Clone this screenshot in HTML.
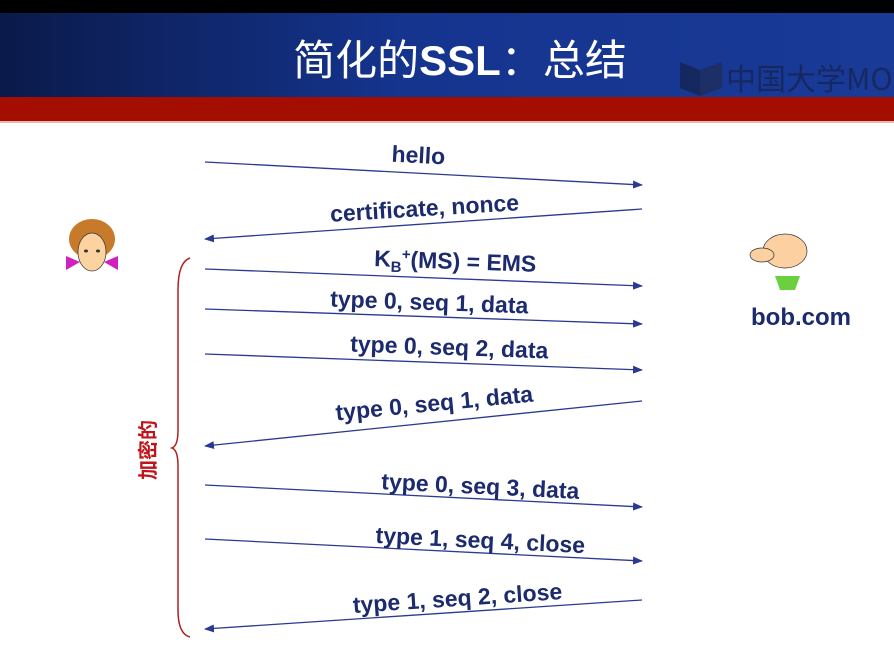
<!DOCTYPE html>
<html><head><meta charset="utf-8"><style>
html,body{margin:0;padding:0;background:#fff;width:894px;height:653px;overflow:hidden}
</style></head><body>
<svg width="894" height="653" viewBox="0 0 894 653" xmlns="http://www.w3.org/2000/svg">
<defs>
<linearGradient id="bg" x1="0" x2="1" y1="0" y2="0">
<stop offset="0" stop-color="#0b1a4a"/><stop offset="0.45" stop-color="#14348e"/><stop offset="1" stop-color="#1a3a98"/>
</linearGradient>
<marker id="ah" markerWidth="10" markerHeight="8" refX="9" refY="4" orient="auto" markerUnits="userSpaceOnUse">
<path d="M0,0 L10,4 L0,8 Z" fill="#2a3a90"/>
</marker>
</defs>
<rect x="0" y="0" width="894" height="13" fill="#000"/>
<rect x="0" y="13" width="894" height="85" fill="url(#bg)"/>
<rect x="0" y="97" width="894" height="24" fill="#a40e00"/>
<rect x="0" y="121" width="894" height="2" fill="#e8b8b0"/>
<text x="460" y="75" text-anchor="middle" fill="#fff" font-family="Liberation Sans, Noto Sans CJK SC, sans-serif" font-size="42">简化的<tspan font-weight="bold">SSL</tspan>：总结</text>
<g opacity="0.4">
<path d="M680,62 L700,70 L700,96 L680,88 Z" fill="#111"/>
<path d="M700,70 L722,62 L722,88 L700,96 Z" fill="#222"/>
<text x="726" y="90" fill="#111" font-family="Noto Sans CJK SC, sans-serif" font-size="30">中国大学MO</text>
</g>
<g stroke="#2a3a90" stroke-width="1.3" fill="none" marker-end="url(#ah)">
<line x1="205" y1="162" x2="642" y2="185"/>
<line x1="642" y1="209" x2="205" y2="239"/>
<line x1="205" y1="269" x2="642" y2="286"/>
<line x1="205" y1="309" x2="642" y2="324"/>
<line x1="205" y1="354" x2="642" y2="370"/>
<line x1="642" y1="401" x2="205" y2="446"/>
<line x1="205" y1="485" x2="642" y2="507"/>
<line x1="205" y1="539" x2="642" y2="561"/>
<line x1="642" y1="600" x2="205" y2="629"/>
</g>
<g fill="#1c2a6e" font-family="Liberation Sans, sans-serif" font-weight="bold" font-size="23" text-anchor="middle">
<text transform="translate(418,163) rotate(3)">hello</text>
<text transform="translate(425,216) rotate(-3.5)">certificate, nonce</text>
<text transform="translate(455,269) rotate(2)">K<tspan font-size="15" dy="5">B</tspan><tspan font-size="15" dy="-13">+</tspan><tspan dy="8">(MS) = EMS</tspan></text>
<text transform="translate(429,310) rotate(2)">type 0, seq 1, data</text>
<text transform="translate(449,355) rotate(2)">type 0, seq 2, data</text>
<text transform="translate(435,411) rotate(-5.5)">type 0, seq 1, data</text>
<text transform="translate(480,494) rotate(2.8)">type 0, seq 3, data</text>
<text transform="translate(480,548) rotate(2.8)">type 1, seq 4, close</text>
<text transform="translate(458,606) rotate(-3.8)">type 1, seq 2, close</text>
<text x="801" y="325" font-size="24">bob.com</text>
</g>
<path d="M190,258 Q178,262 178,290 L178,430 Q178,446 172,448 Q178,450 178,466 L178,610 Q178,634 190,637" stroke="#b02020" stroke-width="1.5" fill="none"/>
<text transform="translate(155,450) rotate(-90)" fill="#c0141a" text-anchor="middle" font-family="Noto Sans CJK SC, sans-serif" font-size="20" font-weight="bold">加密的</text>
<g>
<ellipse cx="92" cy="239" rx="23" ry="20" fill="#c77a2a"/>
<ellipse cx="92" cy="252" rx="14" ry="19" fill="#fcd3a0" stroke="#333" stroke-width="0.7"/>
<path d="M66,256 L80,262 L66,270 Z M118,256 L104,262 L118,270 Z" fill="#d020c0"/>
<ellipse cx="86" cy="251" rx="2" ry="1.5" fill="#333"/>
<ellipse cx="98" cy="251" rx="2" ry="1.5" fill="#333"/>
</g>
<g>
<ellipse cx="785" cy="251" rx="22" ry="17" fill="#fcd0a0" stroke="#333" stroke-width="0.7"/>
<ellipse cx="762" cy="255" rx="12" ry="7" fill="#fcd0a0" stroke="#333" stroke-width="0.7"/>
<path d="M775,276 L800,276 L795,290 L780,290 Z" fill="#6ad040"/>
</g>
</svg>
</body></html>
